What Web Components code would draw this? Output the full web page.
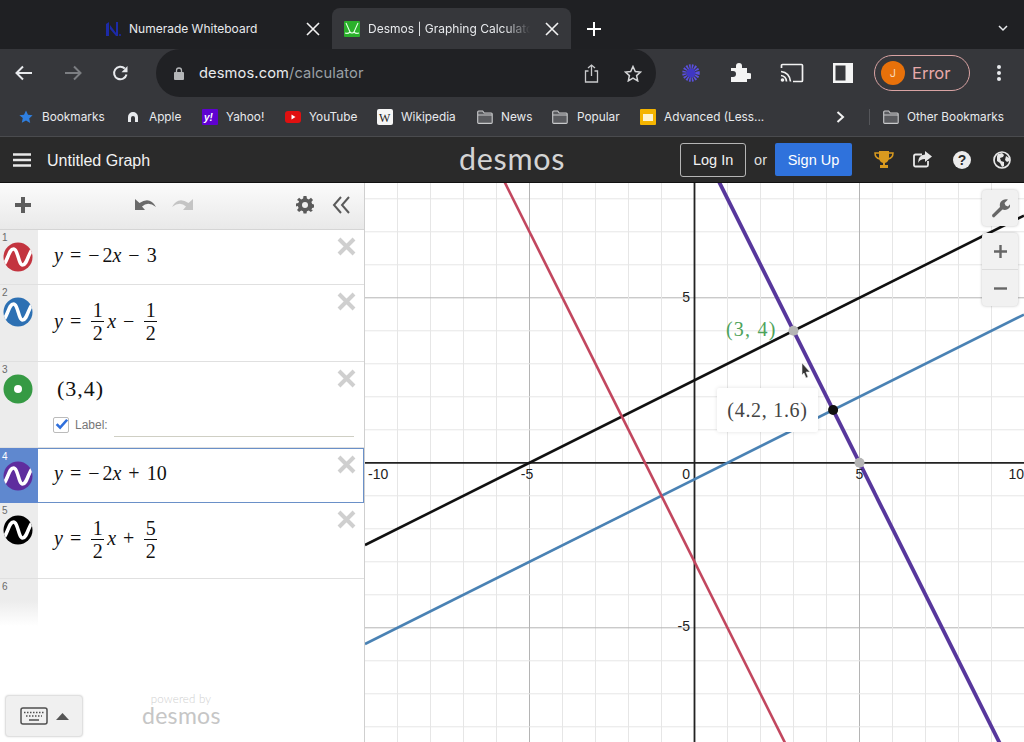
<!DOCTYPE html>
<html><head><meta charset="utf-8"><title>Desmos</title>
<style>
html,body{margin:0;padding:0;height:742px;overflow:hidden;background:#fff}
body{display:flex;flex-direction:column;font-family:"Liberation Sans",sans-serif}
</style></head><body>
<chrome-tabs></chrome-tabs>
<chrome-toolbar></chrome-toolbar>
<chrome-bookmarks></chrome-bookmarks>
<dcg-header></dcg-header>
<dcg-main>
  <dcg-panel slot="panel">
    <expr-row n="1" color="#c3343f" h="55"><i>y</i><s-op>=</s-op><s-un>−</s-un>2<i>x</i><s-op>−</s-op>3</expr-row>
    <expr-row n="2" color="#2d70b3" h="77"><i>y</i><s-op>=</s-op><m-frac><span>1</span><span slot="d">2</span></m-frac><i>x</i><s-op>−</s-op><m-frac><span>1</span><span slot="d">2</span></m-frac></expr-row>
    <expr-row n="3" color="#369a44" h="86" kind="point" label><span style="font-size:22px;letter-spacing:1px;padding-left:3px">(3,4)</span></expr-row>
    <expr-row n="4" color="#5f2d9e" h="55" active><i>y</i><s-op>=</s-op><s-un>−</s-un>2<i>x</i><s-op>+</s-op>10</expr-row>
    <expr-row n="5" color="#000" h="76"><i>y</i><s-op>=</s-op><m-frac><span>1</span><span slot="d">2</span></m-frac><i>x</i><s-op>+</s-op><m-frac><span>5</span><span slot="d">2</span></m-frac></expr-row>
    <expr-row n="6" kind="empty" h="47"></expr-row>
  </dcg-panel>
  <graph-paper slot="graph"></graph-paper>
</dcg-main>
<script>
const folder=`<svg width="16" height="14" viewBox="0 0 16 14"><path d="M.7 12.6V2q0-1 1-1h4l1.500 2h7q1 0 1 1v8.600q0 .8-1 .8H1.700q-1 0-1-.8z" fill="#5a5b5f" stroke="#c9cacc" stroke-width="1.100"/><path d="M1 5h14" stroke="#c9cacc"/></svg>`;
function def(name,css,html,setup){
  customElements.define(name,class extends HTMLElement{
    connectedCallback(){
      if(this.shadowRoot)return;
      const r=this.attachShadow({mode:"open"});
      r.innerHTML=`<style>${css}</style>`+(typeof html==="function"?html(this):html);
      if(setup)setup(this,r);
    }
  });
}
def("chrome-tabs",`
:host{display:flex;height:49px;background:#1f2023;color:#e8eaed;font:12px Inter,"Liberation Sans",sans-serif;align-items:flex-end;flex:none}
.tab{display:flex;align-items:center;height:41px}
.t1{margin-left:105px;width:227px;color:#e8eaed}
.t2{width:239px;background:#36373b;border-radius:8px 8px 0 0;padding-left:12px;box-sizing:border-box}
.lbl{flex:1;white-space:nowrap;padding-left:8px}
.t2 .lbl{-webkit-mask-image:linear-gradient(90deg,#000 78%,transparent 92%);mask-image:linear-gradient(90deg,#000 78%,transparent 92%)}
.x{flex:none;margin-right:12px;display:block}
.plus{margin-left:16px;align-self:center;margin-top:8px}
.chev{margin-left:auto;margin-right:16px;align-self:center;margin-top:8px}
`,`
<div class="tab t1"><svg width="16" height="16" viewBox="0 0 16 16"><path d="M1 15V3l3-2v14zM5 4l6 8V1h2v14h-2L5 8z" fill="#1c2aa8"/><circle cx="15" cy="14" r="1" fill="#1c2aa8"/></svg><span class="lbl">Numerade Whiteboard</span>
<svg class="x" width="14" height="14" viewBox="0 0 14 14"><path d="M1 1l12 12M13 1L1 13" stroke="#f2f2f2" stroke-width="1.600"/></svg></div>
<div class="tab t2"><svg width="16" height="16" viewBox="0 0 16 16"><rect width="16" height="16" rx="1" fill="#2bb02b"/><path d="M2 2l4 9q2 2 4 0l4-9M1 12q3 1 5-1M10 11q2 2 5 1" fill="none" stroke="#e6ffe6" stroke-width="1.100"/></svg><span class="lbl">Desmos | Graphing Calculato</span>
<svg class="x" width="14" height="14" viewBox="0 0 14 14"><path d="M1 1l12 12M13 1L1 13" stroke="#f2f2f2" stroke-width="1.600"/></svg></div>
<svg class="plus" width="14" height="14" viewBox="0 0 14 14"><path d="M7 0v14M0 7h14" stroke="#fff" stroke-width="2"/></svg>
<svg class="chev" width="10" height="7" viewBox="0 0 10 7"><path d="M1 1l4 4 4-4" fill="none" stroke="#e8eaed" stroke-width="1.500"/></svg>
`);
def("chrome-toolbar",`
:host{display:flex;height:48px;background:#36373b;align-items:center;flex:none;font-family:Inter,"Liberation Sans",sans-serif}
.nav{display:flex;width:156px;justify-content:space-between;padding:0 27px 0 15px;box-sizing:border-box;align-items:center}
.omni{width:500px;height:48px;background:#202124;border-radius:24px;display:flex;align-items:center;box-sizing:border-box;padding-left:18px;flex:none}
.url{margin-left:15px;font-size:14.700px;color:#e8eaed;flex:1;letter-spacing:.1px}
.url span{color:#9aa0a6}
.ext{display:flex;align-items:center;flex:1}
.pill{margin-left:21px;width:96px;height:36px;box-sizing:border-box;border:1px solid #d9a3a3;border-radius:18px;display:flex;align-items:center;padding-left:6px;color:#e7a9a9;font-size:16.500px}
.av{width:24px;height:24px;border-radius:50%;background:#e8710a;color:#f9d9b8;font-size:11px;display:flex;align-items:center;justify-content:center;margin-right:7px}
`,`
<div class="nav">
<svg width="18" height="16" viewBox="0 0 18 16"><path d="M17 8H2M8 1.500L1.500 8 8 14.500" fill="none" stroke="#e8eaed" stroke-width="2"/></svg>
<svg width="18" height="16" viewBox="0 0 18 16"><path d="M1 8h15M10 1.500L16.500 8 10 14.500" fill="none" stroke="#7c7e82" stroke-width="2"/></svg>
<svg width="17" height="17" viewBox="0 0 17 17"><path d="M14.500 9.500A6.300 6.300 0 1 1 12.800 3.500" fill="none" stroke="#e8eaed" stroke-width="2"/><path d="M15.500 1v6.300H9.500z" fill="#e8eaed"/></svg>
</div>
<div class="omni">
<svg width="10" height="13" viewBox="0 0 10 13"><rect y="5" width="10" height="8" rx="1" fill="#b4b6b8"/><path d="M2.500 5V3.500a2.500 2.500 0 0 1 5 0V5" fill="none" stroke="#b4b6b8" stroke-width="1.300"/></svg>
<div class="url">desmos.com<span>/calculator</span></div>
<svg width="15" height="19" viewBox="0 0 15 19" style="margin-right:25px"><path d="M4.500 7H1.500v11h12V7h-3M7.500 12V1M4 4l3.500-3L11 4" fill="none" stroke="#c9cacc" stroke-width="1.300"/></svg>
<svg width="18" height="17" viewBox="0 0 18 17" style="margin:0 14px 0 0"><path d="M9 1.500l2.300 5 5.200.6-3.900 3.500 1.100 5.300L9 13.200l-4.700 2.700 1.100-5.300L1.500 7.100l5.200-.6z" fill="none" stroke="#d5d6d8" stroke-width="1.500"/></svg>
</div>
<div class="ext">
<svg style="margin-left:26px" width="18" height="18" viewBox="0 0 18 18"><circle cx="9" cy="9" r="6.500" fill="none" stroke="#5a50e0" stroke-width="4.500" stroke-dasharray="1.500 1.050"/><circle cx="9" cy="9" r="4.500" fill="#3f37c4"/></svg>
<svg width="22" height="22" viewBox="0 0 22 22" style="margin-left:29px"><path d="M1 7h5V5a3 3 0 0 1 6 0v2h5v5h2a3 3 0 0 1 0 6h-2v3H1v-5h2a3 3 0 0 0 0-6H1z" fill="#f4f4f4" transform="translate(1 -1)"/></svg>
<svg width="24" height="20" viewBox="0 0 24 20" style="margin-left:29px"><path d="M1.500 5V2.500q0-1 1-1h19q1 0 1 1v15q0 1-1 1H13" fill="none" stroke="#f2f2f2" stroke-width="1.700"/><path d="M1 8.500q8.500 1 9.500 10M1 12.500q5 .5 5.500 6" fill="none" stroke="#f2f2f2" stroke-width="1.700"/><circle cx="2.500" cy="17" r="1.800" fill="#f2f2f2"/></svg>
<svg width="20" height="20" viewBox="0 0 20 20" style="margin-left:29px"><rect width="20" height="20" fill="#f4f4f4"/><rect x="2.500" y="2.500" width="10" height="15" fill="#36373b"/></svg>
<div class="pill"><div class="av">J</div>Error</div>
<svg style="margin-left:26px" width="6" height="18" viewBox="0 0 6 18"><circle cx="3" cy="3" r="2" fill="#e8eaed"/><circle cx="3" cy="9" r="2" fill="#e8eaed"/><circle cx="3" cy="15" r="2" fill="#e8eaed"/></svg>
</div>
`);
def("chrome-bookmarks",`
:host{display:flex;height:40px;background:#36373b;align-items:center;flex:none;color:#e8eaed;font:11.800px Inter,"Liberation Sans",sans-serif;white-space:nowrap;border-bottom:1px solid #4a4b4e;box-sizing:border-box}
.b{display:flex;align-items:center;gap:8px;height:16px;flex:none}
.b svg{display:block;flex:none}
.right{margin-left:auto;display:flex;align-items:center}
`,`
<div class="b" style="width:106px;margin-left:19px"><svg width="14" height="14" viewBox="0 0 14 14" style="margin-right:1px"><path d="M7 .5l2 4.300 4.600.5-3.400 3.100 1 4.600L7 10.400 2.800 12.700l1-4.600L.4 5.300 5 4.800z" fill="#2f7fe0"/></svg>Bookmarks</div>
<div class="b" style="width:77px"><svg width="16" height="16" viewBox="0 0 16 16"><path fill-rule="evenodd" d="M3 13V8a5 5 0 0 1 10 0v5h-3V9a2 2 0 0 0-4 0v4z" fill="#e8eaed"/></svg>Apple</div>
<div class="b" style="width:83px"><svg width="16" height="16" viewBox="0 0 16 16"><rect width="16" height="16" rx="1" fill="#5f01d1"/><text x="2" y="12" font-family="Liberation Sans" font-weight="700" font-style="italic" font-size="10" fill="#fff">y!</text></svg>Yahoo!</div>
<div class="b" style="width:92px"><svg width="16" height="12" viewBox="0 0 16 12"><rect width="16" height="12" rx="3" fill="#e01010"/><path d="M6.500 3.500v5l4-2.500z" fill="#fff"/></svg>YouTube</div>
<div class="b" style="width:100px"><svg width="16" height="16" viewBox="0 0 16 16"><rect width="16" height="16" rx="2" fill="#f5f5f5"/><text x="2" y="12.500" font-family="Liberation Serif" font-size="12" fill="#222">W</text></svg>Wikipedia</div>
<div class="b" style="width:75px">${folder}News</div>
<div class="b" style="width:88px;gap:9px">${folder}Popular</div>
<div class="b">
<svg width="16" height="16" viewBox="0 0 16 16"><rect width="16" height="16" rx="1" fill="#f4b400"/><rect x="3" y="5" width="10" height="7" fill="#fdf3d0"/></svg>Advanced (Less...</div>
<div class="right"><svg width="9" height="12" viewBox="0 0 9 12" style="margin-right:24px"><path d="M1.500 1l5.500 5-5.500 5" fill="none" stroke="#f2f2f2" stroke-width="2"/></svg><div style="width:1px;height:16px;background:#55565a;margin-right:13px"></div><div class="b" style="margin-right:20px">${folder}Other Bookmarks</div></div>
`);
def("dcg-header",`
:host{display:flex;height:46px;background:#2a2a2a;align-items:center;flex:none;color:#f2f2f2;font:16px "Liberation Sans",sans-serif;position:relative;border-bottom:1px solid #111;box-sizing:border-box}
.ham{margin-left:13px;margin-right:16px}
.title{position:relative;top:1px}
.logo{position:absolute;left:0;right:0;text-align:center;font:400 30.500px Lato,"Liberation Sans",sans-serif;color:#d4d4d4;letter-spacing:.7px;top:1px;line-height:40px;pointer-events:none}
.r{margin-left:auto;display:flex;align-items:center}
.login{width:66px;height:34px;box-sizing:border-box;border:1px solid #b5b5b5;border-radius:3px;display:flex;align-items:center;justify-content:center;font-size:14.500px}
.or{margin:0 8px;font-size:14.500px;color:#ddd}
.su{width:77px;height:33px;background:#2f72dc;border-radius:2px;display:flex;align-items:center;justify-content:center;font-size:14.500px;color:#fff}
.r svg{display:block}
`,`
<svg class="ham" width="18" height="14" viewBox="0 0 18 14"><path d="M0 1.500h18M0 7h18M0 12.500h18" stroke="#e8e8e8" stroke-width="2.500"/></svg>
<span class="title">Untitled Graph</span>
<div class="logo">desmos</div>
<div class="r">
<div class="login">Log In</div><span class="or">or</span><div class="su">Sign Up</div>
<svg style="margin-left:22px" width="20" height="19" viewBox="0 0 20 19"><path d="M5 1h10v6q0 5-4 6v2h3v3H6v-3h3v-2q-4-1-4-6z" fill="#d99a1f"/><path d="M5 3H1q0 5 5 6M15 3h4q0 5-5 6" fill="none" stroke="#d99a1f" stroke-width="1.500"/></svg>
<svg style="margin-left:19px" width="19" height="17" viewBox="0 0 19 17"><path d="M15 10v4q0 1.500-1.500 1.500h-11Q1 15.500 1 14V5q0-1.500 1.500-1.500H9" fill="none" stroke="#e8e8e8" stroke-width="1.800"/><path d="M12 0l7 5.500L12 11V8Q7 8 5 12q0-8 7-8.500z" fill="#e8e8e8"/></svg>
<svg style="margin-left:21px" width="18" height="18" viewBox="0 0 18 18"><circle cx="9" cy="9" r="9" fill="#ececec"/><text x="9" y="14" text-anchor="middle" font-family="Liberation Sans" font-weight="700" font-size="14" fill="#2a2a2a">?</text></svg>
<svg style="margin:0 13px 0 22px" width="18" height="18" viewBox="0 0 18 18"><circle cx="9" cy="9" r="8" fill="none" stroke="#e8e8e8" stroke-width="1.700"/><path d="M5 3l4-1 2 2-1 2-3 1 1 3 3 1v4l-2 1-2-4-3-2V5zM13 5l3 2v3l-2 1-2-2z" fill="#e8e8e8"/></svg>
</div>
`);
def("dcg-main",`
:host{display:flex;flex:1;min-height:0}
.p{display:flex;flex:none;width:365px}
.g{display:block;flex:1;min-width:0}
`,`<slot name="panel" class="p"></slot><slot name="graph" class="g"></slot>`);
def("dcg-panel",`
:host{display:flex;flex-direction:column;width:365px;flex:none;background:#fff;box-sizing:border-box;border-right:1px solid #cfcfcf;height:100%;font-family:"Liberation Serif",serif}
.tb{height:47px;flex:none;box-sizing:border-box;background:linear-gradient(#fbfbfb,#e9e9e9);border-bottom:1px solid #d5d5d5;display:flex;align-items:center;padding:0 13px 2px 14px}
.tb svg{display:block;flex:none}
.list{flex:none}
.foot{margin-top:auto;display:flex;align-items:flex-end;padding:0 0 5px 5px;font-family:"Liberation Sans",sans-serif}
.kb{width:78px;height:42px;box-sizing:border-box;background:#f0f0f0;border:1px solid #e0e0e0;border-radius:4px;box-shadow:0 0 2px rgba(0,0,0,.15);display:flex;align-items:center;padding-left:14px}
.pw{margin-left:59px;width:78px;text-align:center;color:#cfcfcf;margin-bottom:12px}
.pw small{display:block;font:300 11.500px/14px Lato,"Liberation Sans",sans-serif;letter-spacing:.2px}
.pw b{display:block;font:400 23px/19px Lato,"Liberation Sans",sans-serif;letter-spacing:.3px;color:#c6c6c6}
`,`
<div class="tb">
<svg width="18" height="18" viewBox="0 0 18 18"><path d="M9 1v16M1 9h16" stroke="#5d5d5d" stroke-width="4"/></svg>
<svg style="margin-left:103px" width="22" height="14" viewBox="0 0 22 14"><path d="M0 1v11h10L7 8.500Q13 3 21 9 15-2 4.500 5z" fill="#6a6a6a"/></svg>
<svg style="margin-left:14px" width="22" height="14" viewBox="0 0 22 14"><path d="M22 1v11H12L15 8.500Q9 3 1 9 7-2 17.500 5z" fill="#c4c4c4"/></svg>
<svg style="margin-left:auto" width="18" height="18" viewBox="0 0 18 18"><path fill="#5a5a5a" d="M7.500 0h3l.4 2.600 1.900.8L15 1.800 17 4l-1.600 2.100.8 1.900 2.300.5v3l-2.300.4-.8 1.900L17 14l-2.100 2.100-2.100-1.600-1.900.8-.4 2.300h-3l-.4-2.300-1.900-.8-2.100 1.600L1 14l1.600-2.100-.8-1.900L0 10.500v-3l2.300-.4.8-1.900L1 4l2.100-2.200 2.100 1.600 1.900-.8z"/><circle cx="9" cy="9" r="3" fill="#eee"/></svg>
<svg style="margin-left:18px" width="19" height="18" viewBox="0 0 19 18"><path d="M9 1L2 9l7 8M17 1l-7 8 7 8" fill="none" stroke="#5a5a5a" stroke-width="2"/></svg>
</div>
<div class="list"><slot></slot></div>
<div class="foot">
<div class="kb"><svg width="28" height="18" viewBox="0 0 28 18"><rect x="1" y="1" width="26" height="16" rx="2" fill="none" stroke="#4f4f4f" stroke-width="1.500"/><path d="M4 5.500h20M6 9h16" stroke="#4f4f4f" stroke-width="1.500" stroke-dasharray="1.500 1.500"/><path d="M9 13h10" stroke="#4f4f4f" stroke-width="1.500"/></svg><svg style="margin-left:8px" width="13" height="7" viewBox="0 0 13 7"><path d="M6.500 0L13 7H0z" fill="#555"/></svg></div>
<div class="pw"><small>powered by</small><b>desmos</b></div>
</div>
`);
def("expr-row",`
:host{display:flex;box-sizing:border-box;background:#fff;border-bottom:1px solid #e0e0e0;position:relative;color:#111}
.gut{width:38px;flex:none;background:#ececec;color:#6a6a6a;font:10px "Liberation Sans",sans-serif;box-sizing:border-box;padding:2px 0 0 2px}
.body{flex:1;min-width:0;display:flex;flex-direction:column;padding:0 10px 0 16px}
.eq{display:flex;align-items:center;font-size:20px;white-space:nowrap;flex:1;padding-bottom:4px}
.ic{display:block;margin:-1px 0 0 1px;flex:none}
.x{position:absolute;right:8px;top:7px;display:block}
:host([active]){border:1px solid #6a90c8;background:#fff}
:host([active]) .gut{background:#5f88cf;color:#fff;margin:-1px 0 -1px -1px;padding-top:3px;width:38px}
:host([active]) .x{right:7px;top:6px}
:host([kind=point]) .eq{flex:none;height:54px;padding:0}
.lab{display:flex;align-items:center;font:12px "Liberation Sans",sans-serif;color:#777;height:24px;margin:-3px 0 0 -1px}
.lab u{flex:1;border-bottom:1px solid #cfcfc4;height:24px;margin:-1px 0 0 6px;text-decoration:none;align-self:flex-start}
.cb{width:16px;height:16px;box-sizing:border-box;border:1px solid #bbb;border-radius:2px;margin-right:6px;background:#fff;display:block;overflow:visible}
:host([kind=empty]){border:none;background:transparent}
:host([kind=empty]) .gut{background:linear-gradient(#ececec 45%,#fff)}
`,h=>{
  const k=h.getAttribute("kind"),c=h.getAttribute("color");
  h.style.height=h.getAttribute("h")+"px";
  if(k==="empty")return `<div class="gut">${h.getAttribute("n")}</div>`;
  const icon=k==="point"
   ?`<circle cx="15" cy="15" r="14.500" fill="${c}"/><circle cx="15" cy="15" r="4" fill="#fff"/>`
   :`<clipPath id="c"><circle cx="15" cy="15" r="14.500"/></clipPath><circle cx="15" cy="15" r="14.500" fill="${c}"/><path clip-path="url(#c)" d="M0 24C5 18 6 7 10.500 7 15 7 15.500 23 19.500 23 24 23 25 12 30 6" fill="none" stroke="#fff" stroke-width="3.500"/>`;
  return `<div class="gut">${h.getAttribute("n")}<svg class="ic" width="30" height="30" viewBox="0 0 30 30">${icon}</svg></div>
  <div class="body"><div class="eq"><slot></slot></div>${h.hasAttribute("label")?`<div class="lab"><svg class="cb" viewBox="0 0 16 16"><path d="M3 7l4 4 8-9" fill="none" stroke="#2f6fdc" stroke-width="3"/></svg>Label:<u></u></div>`:""}</div>
  <svg class="x" width="19" height="19" viewBox="0 0 19 19"><path d="M2 2l15 15M17 2L2 17" stroke="#cfcfcf" stroke-width="4"/></svg>`;
});
def("s-op",`:host{display:inline-block;margin:0 7px}`,`<slot></slot>`);
def("s-un",`:host{display:inline-block;margin-right:3px}`,`<slot></slot>`);
def("m-frac",`
:host{display:inline-flex;flex-direction:column;align-items:center;font-size:20px;line-height:21px;min-width:13px;margin:0 3px;transform:translateY(1px)}
.n{border-bottom:1px solid #111;padding:0 1px;text-align:center;align-self:stretch}
.d{text-align:center;padding-top:1px}
`,`<div class="n"><slot></slot></div><div class="d"><slot name="d"></slot></div>`);
def("graph-paper",`
:host{display:block;position:relative;width:659px;height:559px;overflow:hidden;background:#fff}
.plot{display:block;position:absolute;left:0;top:0}
.btn{position:absolute;background:#f1f1f1;border-radius:4px;box-shadow:0 0 3px rgba(0,0,0,.25);display:flex;align-items:center;justify-content:center}
.wr{left:617px;top:7px;width:36px;height:36px}
.zm{left:617px;top:50px;width:36px;height:73px;flex-direction:column}
.zm div{flex:1;display:flex;align-items:center;justify-content:center;width:100%}
.zm div+div{border-top:1px solid #dcdcdc}
.tip{position:absolute;left:352px;top:205px;width:101px;height:44px;background:#fff;box-shadow:0 0 4px rgba(0,0,0,.12);border-radius:2px;display:flex;align-items:center;justify-content:center;font:20px "Liberation Serif",serif;color:#444;letter-spacing:.7px}
.lb{position:absolute;left:361px;top:135px;font:20px "Liberation Serif",serif;color:#4ea35a;letter-spacing:1.200px;white-space:nowrap}
.cur{position:absolute;left:436px;top:180px}
`,()=>{
  const W=659,H=559,ox=329.5,oy=279.8,u=33;
  let s="";
  for(let k=-12;k<=12;k++){
    const x=ox+k*u, y=oy+k*u;
    if(k===0)continue;
    const c=k%5===0?"#b4b4b4":"#e6e6e6";
    s+=`<path d="M${x} 0V${H}" stroke="${c}"/><path d="M0 ${y}H${W}" stroke="${c}"/>`;
  }
  s+=`<path d="M${ox} 0V${H}M0 ${oy}H${W}" stroke="#222" stroke-width="1.800"/>`;
  const line=(m,b,col,w)=>{
    const yAt=x=>oy-(m*((x-ox)/u)+b)*u;
    return `<path d="M0 ${yAt(0)}L${W} ${yAt(W)}" stroke="${col}" stroke-width="${w}" fill="none"/>`;
  };
  s+=line(.5,2.5,"#111",2.600)+line(.5,-.5,"#4a82b4",2.600)+line(-2,-3,"#c2475f",2.600)+line(-2,10,"#57379c",3.800);
  const pt=(x,y,r,c)=>`<circle cx="${ox+x*u}" cy="${oy-y*u}" r="${r}" fill="${c}"/>`;
  s+=pt(3,4,5,"#b5b5b5")+pt(5,0,5,"#b5b5b5")+pt(4.2,1.6,5,"#111");
  const t=(x,y,a,v)=>`<text x="${x}" y="${y}" text-anchor="${a}" font-family="Liberation Sans" font-size="14" fill="#222">${v}</text>`;
  s+=t(3,296,"start","-10")+t(162,296,"middle","-5")+t(325,296,"end","0")+t(494.500,296,"middle","5")+t(659,296,"end","10");
  s+=t(325,119,"end","5")+t(325,448,"end","-5");
  return `<svg class="plot" width="${W}" height="${H}" viewBox="0 0 ${W} ${H}">${s}</svg>
  <div class="lb">(3, 4)</div>
  <div class="tip">(4.2, 1.6)</div>
  <div class="btn wr"><svg width="20" height="20" viewBox="0 0 20 20"><path d="M2 17l8-8q-1-5 3-7 2-1 5-.5l-3.500 3.500 1 2.500 2.500 1L21 5q0 4-3 6-3 1.500-5.500.5L4 19.500q-2 0-2-2.500z" fill="#666"/></svg></div>
  <div class="btn zm"><div><svg width="13" height="13" viewBox="0 0 13 13"><path d="M6.500 0v13M0 6.500h13" stroke="#666" stroke-width="2.400"/></svg></div><div><svg width="13" height="3" viewBox="0 0 13 3"><path d="M0 1.500h13" stroke="#666" stroke-width="2.400"/></svg></div></div>
  <svg class="cur" width="10" height="16" viewBox="0 0 10 16"><path d="M1 0l8 9H5l2 5-2 1-2-5-2 2z" fill="#333" stroke="#eee" stroke-width=".6"/></svg>`;
});
</script>
</body></html>
